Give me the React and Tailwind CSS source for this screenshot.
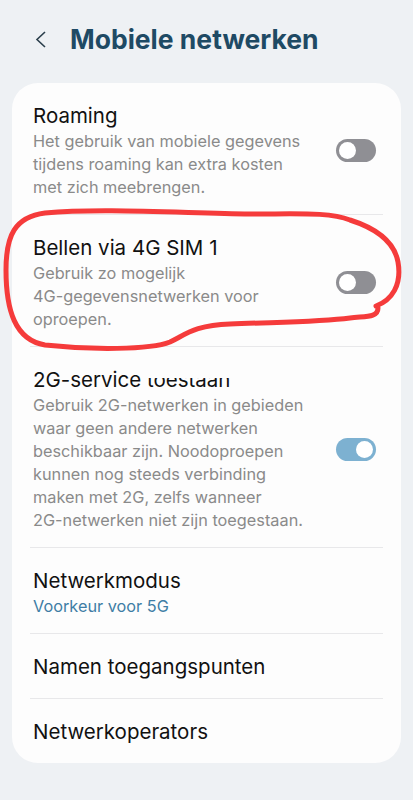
const Toggle = ({ on }) => (
  <div
    className={`relative h-[23px] w-[40px] shrink-0 rounded-full ${
      on ? "bg-[#7db1d1]" : "bg-[#8f8f94]"
    }`}
  >
    <div
      className={`absolute top-[3px] h-[17px] w-[17px] rounded-full bg-white ${
        on ? "right-[3px]" : "left-[3px]"
      }`}
    />
  </div>
);

const Row = ({ title, sub, subBlue, toggle, last, children }) => (
  <div className={`mx-[18px] ${last ? "" : "border-b border-[#e8e8ea]"}`}>
    <div
      className={`relative flex items-center gap-4 px-[3px] pt-[19px] ${
        sub ? "pb-[15px]" : "pb-[18px]"
      }`}
    >
      <div className="min-w-0 flex-1">
        <div className="text-[20.5px] leading-[27px] text-[#111111]">{title}</div>
        {sub && (
          <div
            className={`mt-[1px] whitespace-nowrap text-[16.3px] leading-[23px] ${
              subBlue ? "text-[#3f7da5]" : "text-[#8a8a8a]"
            }`}
          >
            {sub}
          </div>
        )}
      </div>
      {toggle !== undefined && (
        <div className="pr-[4px]">
          <Toggle on={toggle} />
        </div>
      )}
      {children}
    </div>
  </div>
);

export default function App() {
  return (
    <div
      className="relative min-h-[800px] w-full bg-[#eef1f4] pb-10"
      style={{ fontFamily: "Inter, Roboto, 'Noto Sans', sans-serif" }}
    >
      {/* header */}
      <div className="flex h-[83px] items-center pb-[4px] pl-[35px]">
        <svg width="11" height="17" viewBox="0 0 11 17" fill="none">
          <path d="M10 1 L2 8.5 L10 16" stroke="#2b3f4c" strokeWidth="1.6" />
        </svg>
        <h1 className="ml-[24px] text-[26.5px] font-bold leading-none text-[#1e4a64]">
          Mobiele netwerken
        </h1>
      </div>

      {/* card */}
      <div className="mx-[12px] rounded-[26px] bg-[#fdfdfd]">
        <Row
          title="Roaming"
          toggle={false}
          sub={
            <>
              Het gebruik van mobiele gegevens
              <br />
              tijdens roaming kan extra kosten
              <br />
              met zich meebrengen.
            </>
          }
        />
        <Row
          title="Bellen via 4G SIM 1"
          toggle={false}
          sub={
            <>
              Gebruik zo mogelijk
              <br />
              4G-gegevensnetwerken voor
              <br />
              oproepen.
            </>
          }
        />
        <Row
          title="2G-service toestaan"
          toggle={true}
          sub={
            <>
              Gebruik 2G-netwerken in gebieden
              <br />
              waar geen andere netwerken
              <br />
              beschikbaar zijn. Noodoproepen
              <br />
              kunnen nog steeds verbinding
              <br />
              maken met 2G, zelfs wanneer
              <br />
              2G-netwerken niet zijn toegestaan.
            </>
          }
        >
          <div className="absolute left-[113px] top-[13px] h-[18px] w-[100px] bg-[#fdfdfd]" />
        </Row>
        <Row title="Netwerkmodus" sub="Voorkeur voor 5G" subBlue />
        <Row title="Namen toegangspunten" />
        <Row title="Netwerkoperators" last />
      </div>

      {/* red hand-drawn marking */}
      <svg
        className="pointer-events-none absolute left-0 top-0"
        width="413"
        height="400"
        viewBox="0 0 413 400"
        fill="none"
      >
        <path
          d="M376 306 C392 300 402 285 398 262 C394 240 375 228 350 220 C330 212 300 214 250 214 C180 213 100 208 45 213 C15 217 6 235 6 270 C6 310 15 340 45 345 C90 350 150 350 170 342 C185 335 195 325 230 324 C280 322 320 322 350 318 C365 316 378 318 378 308"
          stroke="#f53b3b"
          strokeWidth="5"
          strokeLinecap="round"
          strokeLinejoin="round"
        />
      </svg>
    </div>
  );
}
